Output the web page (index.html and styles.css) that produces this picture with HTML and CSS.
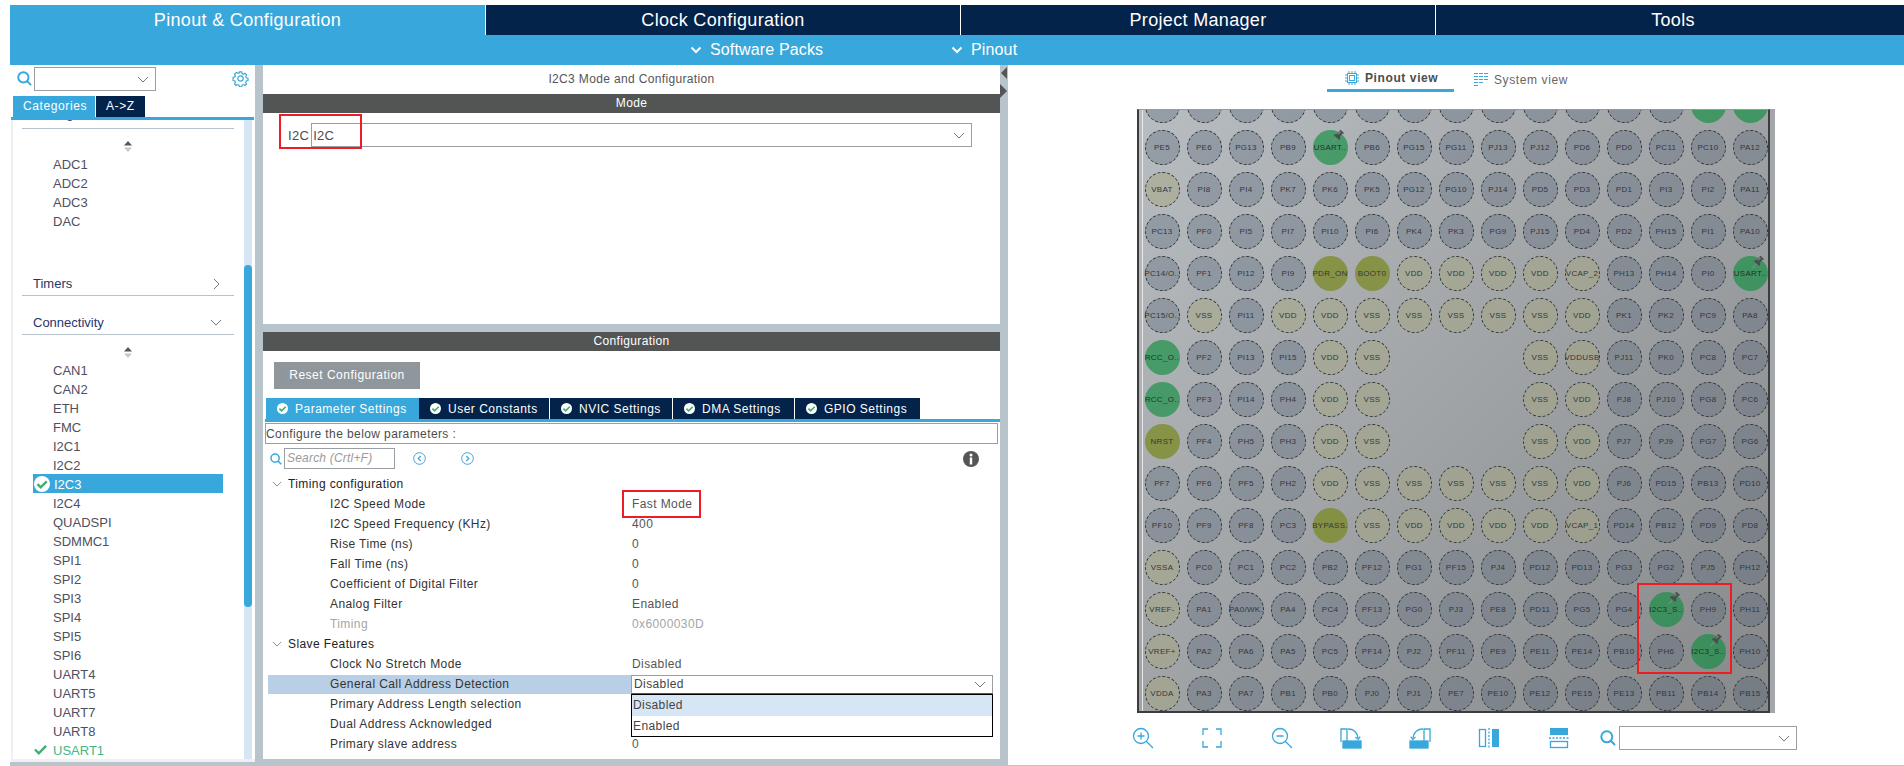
FILE: index.html
```html
<!DOCTYPE html>
<html lang="en">
<head>
  <meta charset="UTF-8" />
  <title>I2C3 Mode and Configuration</title>
  <link rel="stylesheet" href="styles.css">
</head>
<body>
  <svg class="defs" width="0" height="0">
    <symbol id="chev" viewBox="0 0 12 7"><path d="M1 1l5 5 5-5" fill="none" stroke="#777" stroke-width="1"/></symbol>
    <symbol id="sort" viewBox="0 0 10 11"><path d="M5 0l4 4.500H1z" fill="#555"/><path d="M5 11l4-4.500H1z" fill="#c8c8c8"/></symbol>
    <symbol id="search" viewBox="0 0 16 16"><circle cx="6.800" cy="6.800" r="5.500" fill="none" stroke="#38a8dc" stroke-width="2"/><path d="M10.800 10.800l4.200 4.200" stroke="#38a8dc" stroke-width="2"/></symbol>
    <symbol id="tick" viewBox="0 0 16 16"><circle cx="8" cy="8" r="8" fill="#fff"/><path d="M3.500 8.200l3.200 3.200 6-6" fill="none" stroke="#3fae72" stroke-width="2.400"/></symbol>
    <symbol id="pushpin" viewBox="0 0 13 13">
      <g transform="rotate(42 6.500 6.500)">
        <path d="M6.500 7.500V14" stroke="#8a8a8a" stroke-width="1"/>
        <path d="M4 -.5h5v1.500H8.300v3.500l1.900 2.500v1H2.800v-1l1.900-2.500V1H4z" fill="#4a4c4d"/>
        <path d="M5.700 1v3.500" stroke="#a8a8a8" stroke-width=".8"/>
      </g>
    </symbol>
  </svg>

  <div class="app">
    <nav class="topnav">
      <div class="topnav-tab active">Pinout &amp; Configuration</div>
      <div class="topnav-tab">Clock Configuration</div>
      <div class="topnav-tab">Project Manager</div>
      <div class="topnav-tab">Tools</div>
    </nav>
    <div class="subnav">
      <div class="subnav-item subnav-packs"><svg width="12" height="8" viewBox="0 0 12 8"><path d="M1.500 1.500L6 6l4.500-4.500" fill="none" stroke="#fff" stroke-width="2"/></svg>Software Packs</div>
      <div class="subnav-item"><svg width="12" height="8" viewBox="0 0 12 8"><path d="M1.500 1.500L6 6l4.500-4.500" fill="none" stroke="#fff" stroke-width="2"/></svg>Pinout</div>
    </div>

    <div class="main">
      <!-- categories -->
      <aside class="sidebar">
        <div class="cat-search">
          <svg class="cat-search-icon" width="15" height="15"><use href="#search"/></svg>
          <div class="combo cat-combo"><svg width="12" height="7"><use href="#chev"/></svg></div>
          <svg class="gear" width="17" height="17" viewBox="0 0 17 17">
            <circle cx="8.500" cy="8.500" r="2.700" fill="none" stroke="#38a8dc" stroke-width="1.200"/>
            <path d="M7.200 1h2.600l.4 2 1.500.7 1.800-1 1.700 1.800-1 1.700.6 1.500 2 .5v2.500l-2 .5-.6 1.500 1 1.700-1.700 1.800-1.800-1-1.500.6-.4 2H7.200l-.4-2-1.500-.6-1.800 1-1.700-1.800 1-1.700-.6-1.500-2-.5V7.200l2-.5.6-1.500-1-1.700L4 1.700l1.800 1 1.500-.7z" transform="translate(.9 .9) scale(.9)" fill="none" stroke="#38a8dc" stroke-width="1.300"/>
          </svg>
        </div>
        <div class="cat-tabs">
          <div class="cat-tab active">Categories</div>
          <div class="cat-tab">A-&gt;Z</div>
        </div>
        <div class="tree">
          <div class="tree-list">
            <div class="tree-head tree-head-cut">Analog</div>
            <div class="tree-sort"><svg width="10" height="11"><use href="#sort"/></svg></div>
            <div class="tree-item">ADC1</div>
            <div class="tree-item">ADC2</div>
            <div class="tree-item">ADC3</div>
            <div class="tree-item">DAC</div>
            <div class="tree-head tree-head-timers">Timers<svg width="7" height="12" viewBox="0 0 7 12"><path d="M1 1l5 5-5 5" fill="none" stroke="#777"/></svg></div>
            <div class="tree-head">Connectivity<svg width="12" height="7"><use href="#chev"/></svg></div>
            <div class="tree-sort"><svg width="10" height="11"><use href="#sort"/></svg></div>
            <div class="tree-item">CAN1</div>
            <div class="tree-item">CAN2</div>
            <div class="tree-item">ETH</div>
            <div class="tree-item">FMC</div>
            <div class="tree-item">I2C1</div>
            <div class="tree-item">I2C2</div>
            <div class="tree-item selected"><svg width="16" height="16"><use href="#tick"/></svg>I2C3</div>
            <div class="tree-item">I2C4</div>
            <div class="tree-item">QUADSPI</div>
            <div class="tree-item">SDMMC1</div>
            <div class="tree-item">SPI1</div>
            <div class="tree-item">SPI2</div>
            <div class="tree-item">SPI3</div>
            <div class="tree-item">SPI4</div>
            <div class="tree-item">SPI5</div>
            <div class="tree-item">SPI6</div>
            <div class="tree-item">UART4</div>
            <div class="tree-item">UART5</div>
            <div class="tree-item">UART7</div>
            <div class="tree-item">UART8</div>
            <div class="tree-item used"><svg width="13" height="11" viewBox="0 0 13 11"><path d="M1 5.500l3.800 3.800L12 1.800" fill="none" stroke="#3fae72" stroke-width="2.400"/></svg>USART1</div>
          </div>
          <div class="tree-scroll"><div class="tree-thumb"></div></div>
        </div>
      </aside>

      <!-- mode and configuration -->
      <section class="middle">
        <div class="mode-panel">
          <div class="panel-title">I2C3 Mode and Configuration</div>
          <div class="bar">Mode</div>
          <div class="mode-row">
            <span class="mode-label">I2C</span>
            <div class="combo mode-combo"><span>I2C</span><svg width="12" height="7"><use href="#chev"/></svg></div>
            <div class="redbox redbox-mode"></div>
          </div>
        </div>
        <div class="config-panel">
          <div class="bar">Configuration</div>
          <div class="reset-btn">Reset Configuration</div>
          <div class="cfg-tabs">
            <div class="cfg-tab active tab-param"><svg width="11" height="11"><use href="#tick"/></svg>Parameter Settings</div>
            <div class="cfg-tab tab-user"><svg width="11" height="11"><use href="#tick"/></svg>User Constants</div>
            <div class="cfg-tab tab-nvic"><svg width="11" height="11"><use href="#tick"/></svg>NVIC Settings</div>
            <div class="cfg-tab tab-dma"><svg width="11" height="11"><use href="#tick"/></svg>DMA Settings</div>
            <div class="cfg-tab tab-gpio"><svg width="11" height="11"><use href="#tick"/></svg>GPIO Settings</div>
          </div>
          <div class="cfg-hint">Configure the below parameters :</div>
          <div class="param-search">
            <svg width="12" height="12"><use href="#search"/></svg>
            <div class="param-input">Search (Crtl+F)</div>
            <svg class="nav-prev" width="13" height="13" viewBox="0 0 13 13"><circle cx="6.500" cy="6.500" r="5.800" fill="none" stroke="#38a8dc"/><path d="M7.800 4L5.200 6.500 7.800 9" fill="none" stroke="#38a8dc" stroke-width="1.200"/></svg>
            <svg class="nav-next" width="13" height="13" viewBox="0 0 13 13"><circle cx="6.500" cy="6.500" r="5.800" fill="none" stroke="#38a8dc"/><path d="M5.200 4l2.600 2.500L5.200 9" fill="none" stroke="#38a8dc" stroke-width="1.200"/></svg>
            <svg class="info" width="16" height="16" viewBox="0 0 16 16"><circle cx="8" cy="8" r="8" fill="#555"/><circle cx="8" cy="4" r="1.500" fill="#fff"/><rect x="6.800" y="6.500" width="2.400" height="7" fill="#fff"/></svg>
          </div>
          <div class="params">
            <div class="param-group"><svg width="10" height="6"><use href="#chev"/></svg>Timing configuration</div>
            <div class="param"><span class="param-name">I2C Speed Mode</span><span class="param-value">Fast Mode<i class="redbox redbox-speed"></i></span></div>
            <div class="param"><span class="param-name">I2C Speed Frequency (KHz)</span><span class="param-value">400</span></div>
            <div class="param"><span class="param-name">Rise Time (ns)</span><span class="param-value">0</span></div>
            <div class="param"><span class="param-name">Fall Time (ns)</span><span class="param-value">0</span></div>
            <div class="param"><span class="param-name">Coefficient of Digital Filter</span><span class="param-value">0</span></div>
            <div class="param"><span class="param-name">Analog Filter</span><span class="param-value">Enabled</span></div>
            <div class="param muted"><span class="param-name">Timing</span><span class="param-value">0x6000030D</span></div>
            <div class="param-group"><svg width="10" height="6"><use href="#chev"/></svg>Slave Features</div>
            <div class="param"><span class="param-name">Clock No Stretch Mode</span><span class="param-value">Disabled</span></div>
            <div class="param editing">
              <span class="param-name">General Call Address Detection</span>
              <div class="param-select">Disabled<svg width="12" height="7"><use href="#chev"/></svg></div>
              <div class="param-menu">
                <div class="param-option hover">Disabled</div>
                <div class="param-option">Enabled</div>
              </div>
            </div>
            <div class="param"><span class="param-name">Primary Address Length selection</span></div>
            <div class="param"><span class="param-name">Dual Address Acknowledged</span></div>
            <div class="param"><span class="param-name">Primary slave address</span><span class="param-value">0</span></div>
          </div>
        </div>
      </section>

      <div class="splitter">
        <svg width="8" height="12" viewBox="0 0 8 12"><path d="M7 0v12L1 6z" fill="#555"/></svg>
        <svg width="8" height="14" viewBox="0 0 8 14"><path d="M0 0v14l7-7z" fill="#555"/></svg>
      </div>

      <!-- pinout -->
      <section class="pinout">
        <div class="view-tabs">
          <div class="view-tab active">
            <svg width="14" height="14" viewBox="0 0 14 14" fill="none" stroke="#38a8dc"><rect x="2.500" y="2.500" width="9" height="9"/><rect x="4.500" y="4.500" width="5" height="5"/><path d="M4 0v2M7 0v2M10 0v2M4 12v2M7 12v2M10 12v2M0 4h2M0 7h2M0 10h2M12 4h2M12 7h2M12 10h2"/></svg>
            Pinout view
          </div>
          <div class="view-tab">
            <svg width="14" height="14" viewBox="0 0 14 14" fill="none" stroke="#38a8dc"><path d="M0 .5h4M5 .5h4M10 .5h4M0 3.500h4M5 3.500h4M10 3.500h4M0 6.500h4M5 6.500h4M10 6.500h4M0 9.500h4M5 9.500h4M0 12.500h4"/></svg>
            System view
          </div>
        </div>

        <div class="chip">
          <div class="pins">
            <div class="pin"></div><div class="pin"></div><div class="pin"></div><div class="pin"></div><div class="pin"></div><div class="pin"></div><div class="pin"></div><div class="pin"></div><div class="pin"></div><div class="pin"></div><div class="pin"></div><div class="pin"></div><div class="pin"></div><div class="pin set"></div><div class="pin set"></div>

            <div class="pin">PE5</div><div class="pin">PE6</div><div class="pin">PG13</div><div class="pin">PB9</div><div class="pin set">USART..<svg class="pinned" width="13" height="13"><use href="#pushpin"/></svg></div><div class="pin">PB6</div><div class="pin">PG15</div><div class="pin">PG11</div><div class="pin">PJ13</div><div class="pin">PJ12</div><div class="pin">PD6</div><div class="pin">PD0</div><div class="pin">PC11</div><div class="pin">PC10</div><div class="pin">PA12</div>

            <div class="pin pwr">VBAT</div><div class="pin">PI8</div><div class="pin">PI4</div><div class="pin">PK7</div><div class="pin">PK6</div><div class="pin">PK5</div><div class="pin">PG12</div><div class="pin">PG10</div><div class="pin">PJ14</div><div class="pin">PD5</div><div class="pin">PD3</div><div class="pin">PD1</div><div class="pin">PI3</div><div class="pin">PI2</div><div class="pin">PA11</div>

            <div class="pin">PC13</div><div class="pin">PF0</div><div class="pin">PI5</div><div class="pin">PI7</div><div class="pin">PI10</div><div class="pin">PI6</div><div class="pin">PK4</div><div class="pin">PK3</div><div class="pin">PG9</div><div class="pin">PJ15</div><div class="pin">PD4</div><div class="pin">PD2</div><div class="pin">PH15</div><div class="pin">PI1</div><div class="pin">PA10</div>

            <div class="pin">PC14/O..</div><div class="pin">PF1</div><div class="pin">PI12</div><div class="pin">PI9</div><div class="pin sys">PDR_ON</div><div class="pin sys">BOOT0</div><div class="pin pwr">VDD</div><div class="pin pwr">VDD</div><div class="pin pwr">VDD</div><div class="pin pwr">VDD</div><div class="pin pwr">VCAP_2</div><div class="pin">PH13</div><div class="pin">PH14</div><div class="pin">PI0</div><div class="pin set">USART..<svg class="pinned" width="13" height="13"><use href="#pushpin"/></svg></div>

            <div class="pin">PC15/O..</div><div class="pin pwr">VSS</div><div class="pin">PI11</div><div class="pin pwr">VDD</div><div class="pin pwr">VDD</div><div class="pin pwr">VSS</div><div class="pin pwr">VSS</div><div class="pin pwr">VSS</div><div class="pin pwr">VSS</div><div class="pin pwr">VSS</div><div class="pin pwr">VDD</div><div class="pin">PK1</div><div class="pin">PK2</div><div class="pin">PC9</div><div class="pin">PA8</div>

            <div class="pin set">RCC_O..</div><div class="pin">PF2</div><div class="pin">PI13</div><div class="pin">PI15</div><div class="pin pwr">VDD</div><div class="pin pwr">VSS</div><div class="pin-gap"></div><div class="pin-gap"></div><div class="pin-gap"></div><div class="pin pwr">VSS</div><div class="pin pwr">VDDUSB</div><div class="pin">PJ11</div><div class="pin">PK0</div><div class="pin">PC8</div><div class="pin">PC7</div>

            <div class="pin set">RCC_O..</div><div class="pin">PF3</div><div class="pin">PI14</div><div class="pin">PH4</div><div class="pin pwr">VDD</div><div class="pin pwr">VSS</div><div class="pin-gap"></div><div class="pin-gap"></div><div class="pin-gap"></div><div class="pin pwr">VSS</div><div class="pin pwr">VDD</div><div class="pin">PJ8</div><div class="pin">PJ10</div><div class="pin">PG8</div><div class="pin">PC6</div>

            <div class="pin sys">NRST</div><div class="pin">PF4</div><div class="pin">PH5</div><div class="pin">PH3</div><div class="pin pwr">VDD</div><div class="pin pwr">VSS</div><div class="pin-gap"></div><div class="pin-gap"></div><div class="pin-gap"></div><div class="pin pwr">VSS</div><div class="pin pwr">VDD</div><div class="pin">PJ7</div><div class="pin">PJ9</div><div class="pin">PG7</div><div class="pin">PG6</div>

            <div class="pin">PF7</div><div class="pin">PF6</div><div class="pin">PF5</div><div class="pin">PH2</div><div class="pin pwr">VDD</div><div class="pin pwr">VSS</div><div class="pin pwr">VSS</div><div class="pin pwr">VSS</div><div class="pin pwr">VSS</div><div class="pin pwr">VSS</div><div class="pin pwr">VDD</div><div class="pin">PJ6</div><div class="pin">PD15</div><div class="pin">PB13</div><div class="pin">PD10</div>

            <div class="pin">PF10</div><div class="pin">PF9</div><div class="pin">PF8</div><div class="pin">PC3</div><div class="pin sys">BYPASS.</div><div class="pin pwr">VSS</div><div class="pin pwr">VDD</div><div class="pin pwr">VDD</div><div class="pin pwr">VDD</div><div class="pin pwr">VDD</div><div class="pin pwr">VCAP_1</div><div class="pin">PD14</div><div class="pin">PB12</div><div class="pin">PD9</div><div class="pin">PD8</div>

            <div class="pin pwr">VSSA</div><div class="pin">PC0</div><div class="pin">PC1</div><div class="pin">PC2</div><div class="pin">PB2</div><div class="pin">PF12</div><div class="pin">PG1</div><div class="pin">PF15</div><div class="pin">PJ4</div><div class="pin">PD12</div><div class="pin">PD13</div><div class="pin">PG3</div><div class="pin">PG2</div><div class="pin">PJ5</div><div class="pin">PH12</div>

            <div class="pin pwr">VREF-</div><div class="pin">PA1</div><div class="pin">PA0/WK.</div><div class="pin">PA4</div><div class="pin">PC4</div><div class="pin">PF13</div><div class="pin">PG0</div><div class="pin">PJ3</div><div class="pin">PE8</div><div class="pin">PD11</div><div class="pin">PG5</div><div class="pin">PG4</div><div class="pin set">I2C3_S..<svg class="pinned" width="13" height="13"><use href="#pushpin"/></svg></div><div class="pin">PH9</div><div class="pin">PH11</div>

            <div class="pin pwr">VREF+</div><div class="pin">PA2</div><div class="pin">PA6</div><div class="pin">PA5</div><div class="pin">PC5</div><div class="pin">PF14</div><div class="pin">PJ2</div><div class="pin">PF11</div><div class="pin">PE9</div><div class="pin">PE11</div><div class="pin">PE14</div><div class="pin">PB10</div><div class="pin">PH6</div><div class="pin set">I2C3_S..<svg class="pinned" width="13" height="13"><use href="#pushpin"/></svg></div><div class="pin">PH10</div>

            <div class="pin pwr">VDDA</div><div class="pin">PA3</div><div class="pin">PA7</div><div class="pin">PB1</div><div class="pin">PB0</div><div class="pin">PJ0</div><div class="pin">PJ1</div><div class="pin">PE7</div><div class="pin">PE10</div><div class="pin">PE12</div><div class="pin">PE15</div><div class="pin">PE13</div><div class="pin">PB11</div><div class="pin">PB14</div><div class="pin">PB15</div>
          </div>
          <div class="redbox redbox-pins"></div>
        </div>

        <div class="chip-tools">
          <svg width="22" height="22" viewBox="0 0 22 22" fill="none" stroke="#38a8dc" stroke-width="1.300"><circle cx="9" cy="9" r="7.500"/><path d="M14.500 14.500L21 21M9 5.500v7M5.500 9h7"/></svg>
          <svg width="22" height="22" viewBox="0 0 22 22" fill="none" stroke="#38a8dc" stroke-width="1.300"><path d="M7 2H2v6M15 2h5v6M7 20H2v-6M15 20h5v-6"/></svg>
          <svg width="22" height="22" viewBox="0 0 22 22" fill="none" stroke="#38a8dc" stroke-width="1.300"><circle cx="9" cy="9" r="7.500"/><path d="M14.500 14.500L21 21M5.500 9h7"/></svg>
          <svg width="22" height="22" viewBox="0 0 22 22" fill="none" stroke="#38a8dc" stroke-width="1.300"><path d="M1 15V2h6v18M8 2c5 0 9 3 10 9"/><path d="M15.500 10l2.700 2.600 2-3" /><rect x="3" y="14" width="18" height="7" fill="#38a8dc"/></svg>
          <svg width="22" height="22" viewBox="0 0 22 22" fill="none" stroke="#38a8dc" stroke-width="1.300"><path d="M21 15V2h-6v18M14 2C9 2 5 5 4 11"/><path d="M6.500 10l-2.700 2.600-2-3"/><rect x="1" y="14" width="18" height="7" fill="#38a8dc"/></svg>
          <svg width="22" height="22" viewBox="0 0 22 22" fill="none" stroke="#38a8dc" stroke-width="1.300"><rect x="1.500" y="2.500" width="6" height="17"/><path d="M11 1v20" stroke-dasharray="2 1.500"/><rect x="14" y="2" width="7" height="18" fill="#38a8dc" stroke="none"/></svg>
          <svg width="22" height="22" viewBox="0 0 22 22" fill="none" stroke="#38a8dc" stroke-width="1.300"><rect x="2" y="1" width="18" height="7" fill="#38a8dc" stroke="none"/><path d="M1 11h20" stroke-dasharray="2 1.500"/><rect x="2.500" y="14.500" width="17" height="6"/></svg>
          <svg class="tool-search" width="16" height="16"><use href="#search"/></svg>
          <div class="combo tool-combo"><svg width="12" height="7"><use href="#chev"/></svg></div>
        </div>
      </section>
    </div>
  </div>
</body>
</html>
```

FILE: styles.css
```css
* { box-sizing: border-box; }
html, body {
  margin: 0;
  height: 766px;
  overflow: hidden;
  background: #fff;
}
body {
  font-family: "Liberation Sans", Arial, sans-serif;
  font-size: 12px;
  color: #4c4c4c;
}
.defs { position: absolute; }
.app {
  width: 1904px;
  height: 766px;
  padding: 5px 0 0 10px;
  display: flex;
  flex-direction: column;
}

/* top navigation */
.topnav {
  display: flex;
  height: 30px;
  flex: none;
  background: #38a8dc;
}
.topnav-tab {
  flex: none;
  width: 475px;
  background: #03234b;
  border-left: 1px solid #fff;
  color: #fff;
  font-size: 18px;
  letter-spacing: .33px;
  line-height: 30px;
  text-align: center;
}
.topnav-tab.active {
  background: #38a8dc;
  border-left: none;
}
.subnav {
  display: flex;
  height: 30px;
  flex: none;
  padding-left: 680px;
  background: #38a8dc;
  color: #fff;
  font-size: 16px;
  letter-spacing: .15px;
}
.subnav-item {
  display: flex;
  align-items: center;
  gap: 8px;
  height: 30px;
}
.subnav-packs { width: 261px; }

.main {
  flex: 1;
  display: flex;
  min-height: 0;
  background: #b8c4cb;
  border-bottom: 1px solid #b8c4cb;
}

/* left column */
.sidebar {
  flex: none;
  width: 245px;
  height: 697px;
  background: #fff;
  display: flex;
  flex-direction: column;
}
.cat-search {
  flex: none;
  height: 31px;
  display: flex;
  padding: 2px 0 0 7px;
  align-items: flex-start;
}
.cat-search-icon { margin: 4px 2px 0 0; }
.combo {
  display: flex;
  align-items: center;
  justify-content: flex-end;
  padding-right: 6px;
  border: 1px solid #9a9fa3;
  background: #fff;
  height: 24px;
}
.cat-combo { width: 122px; }
.gear { margin: 3px 0 0 76px; }
.cat-tabs {
  flex: none;
  display: flex;
  height: 24px;
  margin-left: 1px;
  padding-left: 2px;
  width: 243px;
  gap: 1px;
  border-bottom: 3px solid #38a8dc;
}
.cat-tab {
  background: #03234b;
  color: #fff;
  line-height: 21px;
  letter-spacing: .6px;
  padding: 0 10px;
}
.cat-tab.active {
  background: #38a8dc;
  width: 82px;
}
.tree {
  flex: 1;
  min-height: 0;
  display: flex;
  margin-left: 1px;
  border-left: 2px solid #f0f0f0;
  border-bottom: 3px solid #f0f0f0;
  overflow: hidden;
}
.tree-list {
  flex: none;
  width: 231px;
  padding-left: 9px;
  font-size: 13px;
}
.tree-head {
  display: flex;
  align-items: center;
  justify-content: space-between;
  height: 25px;
  width: 212px;
  margin-top: 14px;
  padding: 1px 12px 0 11px;
  color: #28356b;
  border-bottom: 1px solid #b8c4cb;
}
/* only the descender of this heading shows below the tabs */
.tree-head-cut {
  margin-top: -16px;
  padding-bottom: 6px;
}
.tree-head-timers {
  margin-top: 41px;
  padding-right: 14px;
}
.tree-sort {
  height: 25px;
  padding: 12px 0 0 101px;
}
.tree-sort svg { display: block; }
.tree-item {
  display: flex;
  align-items: center;
  height: 19px;
  width: 190px;
  margin-left: 11px;
  padding: 1px 0 0 20px;
  color: #4f4f60;
  position: relative;
}
.tree-item svg {
  position: absolute;
  left: 1px;
  top: 2px;
}
.tree-item.selected {
  background: #38a8dc;
  color: #fff;
  padding-left: 21px;
}
.tree-item.used { color: #45b584; }
.tree-item.used svg { left: 1px; top: 4px; }
.tree-scroll {
  flex: none;
  width: 8px;
  background: #d6e6f4;
}
.tree-thumb {
  height: 342px;
  margin-top: 145px;
  background: #38a8dc;
  border-radius: 4px;
}

/* middle column */
.middle {
  flex: none;
  width: 737px;
  margin-left: 8px;
  height: 697px;
  display: flex;
  flex-direction: column;
}
.mode-panel {
  flex: none;
  height: 259px;
  background: #fff;
}
.panel-title {
  height: 29px;
  line-height: 29px;
  text-align: center;
  letter-spacing: .35px;
  color: #555;
}
.bar {
  height: 19px;
  line-height: 19px;
  background: #535554;
  color: #fff;
  text-align: center;
  letter-spacing: .35px;
}
.mode-row {
  position: relative;
  display: flex;
  align-items: center;
  padding: 10px 0 0 25px;
  gap: 2px;
  letter-spacing: .3px;
  font-size: 13px;
}
.mode-combo {
  width: 661px;
  justify-content: space-between;
  padding: 0 6px 0 1px;
}
.redbox {
  position: absolute;
  border: 2px solid #ee1c25;
  pointer-events: none;
}
.redbox-mode {
  left: 16px;
  top: 1px;
  width: 83px;
  height: 35px;
}
.config-panel {
  flex: 1;
  margin: 8px 0 3px;
  background: #fff;
  min-height: 0;
}
.reset-btn {
  width: 146px;
  height: 27px;
  margin: 11px 0 0 11px;
  background: #8f979d;
  color: #fff;
  line-height: 27px;
  text-align: center;
  letter-spacing: .5px;
}
.cfg-tabs {
  display: flex;
  height: 24px;
  margin: 9px 0 0 2px;
  padding-left: 1px;
  border-bottom: 3px solid #38a8dc;
}
.cfg-tab {
  display: flex;
  align-items: center;
  gap: 7px;
  padding-left: 11px;
  background: #03234b;
  color: #fff;
  letter-spacing: .5px;
  border-right: 1px solid #fff;
  white-space: nowrap;
}
.cfg-tab.active { background: #38a8dc; border-right: none; }
.tab-param { width: 153px; }
.tab-user { width: 131px; }
.tab-nvic { width: 123px; }
.tab-dma { width: 122px; }
.tab-gpio { width: 125px; border-right: none; }
.cfg-hint {
  height: 21px;
  margin: 1px 2px 0;
  border: 1px solid #9a9fa3;
  line-height: 20px;
  letter-spacing: .4px;
}
.param-search {
  display: flex;
  align-items: center;
  height: 21px;
  margin-top: 4px;
  padding-left: 7px;
}
.param-input {
  width: 111px;
  height: 21px;
  margin-left: 2px;
  border: 1px solid #9a9fa3;
  padding-left: 2px;
  line-height: 19px;
  font-style: italic;
  color: #9a9a9a;
  letter-spacing: .2px;
}
.nav-prev { margin-left: 18px; }
.nav-next { margin-left: 35px; }
.info { margin-left: 489px; }
.params { margin-top: 5px; }
.param-group {
  display: flex;
  align-items: center;
  height: 20px;
  padding-left: 9px;
  gap: 6px;
  color: #222;
  letter-spacing: .4px;
}
.param {
  position: relative;
  display: flex;
  align-items: center;
  height: 20px;
  margin-left: 5px;
  letter-spacing: .4px;
}
.param-name {
  flex: none;
  width: 363px;
  height: 19px;
  line-height: 19px;
  padding-left: 62px;
  color: #333;
}
.param-value {
  position: relative;
  padding-left: 1px;
  color: #555;
}
.param.muted .param-name, .param.muted .param-value { color: #a5a5a5; }
.redbox-speed {
  left: -9px;
  top: -7px;
  width: 79px;
  height: 28px;
}
.param.editing .param-name { background: #b8cfe5; }
.param-select {
  display: flex;
  align-items: center;
  justify-content: space-between;
  width: 362px;
  height: 19px;
  padding: 0 6px 0 2px;
  background: #fff;
  border: 1px solid #9a9fa3;
  border-bottom-color: #555;
  color: #444;
}
.param-menu {
  position: absolute;
  left: 363px;
  top: 20px;
  width: 362px;
  height: 43px;
  background: #fff;
  border: 1px solid #000;
  z-index: 2;
}
.param-option {
  height: 20.500px;
  line-height: 20px;
  padding-left: 1px;
  color: #444;
}
.param-option.hover { background: #d6e6f4; }

.splitter {
  flex: none;
  width: 8px;
  display: flex;
  flex-direction: column;
  gap: 5px;
  padding-top: 2px;
}

/* right column */
.pinout {
  flex: 1;
  background: #fff;
  min-width: 0;
}
.view-tabs {
  display: flex;
  height: 27px;
  padding-left: 319px;
  gap: 20px;
}
.view-tab {
  display: flex;
  align-items: center;
  gap: 6px;
  height: 27px;
  padding-top: 2px;
  letter-spacing: .6px;
  color: #666;
}
.view-tab.active {
  width: 127px;
  padding-left: 18px;
  border-bottom: 3px solid #38a8dc;
  font-weight: bold;
  color: #4c4c4c;
}
.chip {
  position: relative;
  width: 633px;
  height: 604px;
  margin: 17px 0 0 129px;
  padding-left: 3px;
  overflow: hidden;
  background: linear-gradient(135deg, #b8bdc1, #87898a);
  border-top: 1px solid #999;
  border-left: 2px solid #3c3c3c;
  border-right: 2px solid #3c3c3c;
  border-bottom: 2px solid #3c3c3c;
  box-shadow: 5px 0 0 #a3a7a9;
}
/* the first row of pins is cut by the top edge of the chip */
.pins {
  display: grid;
  grid-template-columns: repeat(15, 35px);
  grid-auto-rows: 35px;
  gap: 7px;
  margin-top: -22px;
  padding-left: 1.500px;
  padding-bottom: 40px;
  border-left: 1px solid #e8e8e8;
}
.pin {
  position: relative;
  display: flex;
  align-items: center;
  justify-content: center;
  border-radius: 50%;
  border: 1px dashed #33373a;
  background: rgba(85, 100, 120, .35);
  font-size: 8px;
  letter-spacing: .3px;
  color: #33373b;
  white-space: nowrap;
}
.pin.pwr { background: rgba(165, 165, 130, .5); }
.pin.set {
  background: rgba(17, 143, 65, .65);
  border-color: transparent;
  color: #243029;
}
.pin.sys {
  background: rgba(125, 140, 45, .8);
  border-color: transparent;
}
.pinned {
  position: absolute;
  left: 17px;
  top: -1px;
}
.redbox-pins {
  left: 498px;
  top: 473px;
  width: 95px;
  height: 91px;
}

/* bottom tools */
.chip-tools {
  display: flex;
  align-items: center;
  gap: 47.300px;
  height: 50px;
  padding-left: 124px;
}
.tool-search { margin-left: -17px; }
.tool-combo {
  width: 178px;
  margin-left: -44px;
}
```
